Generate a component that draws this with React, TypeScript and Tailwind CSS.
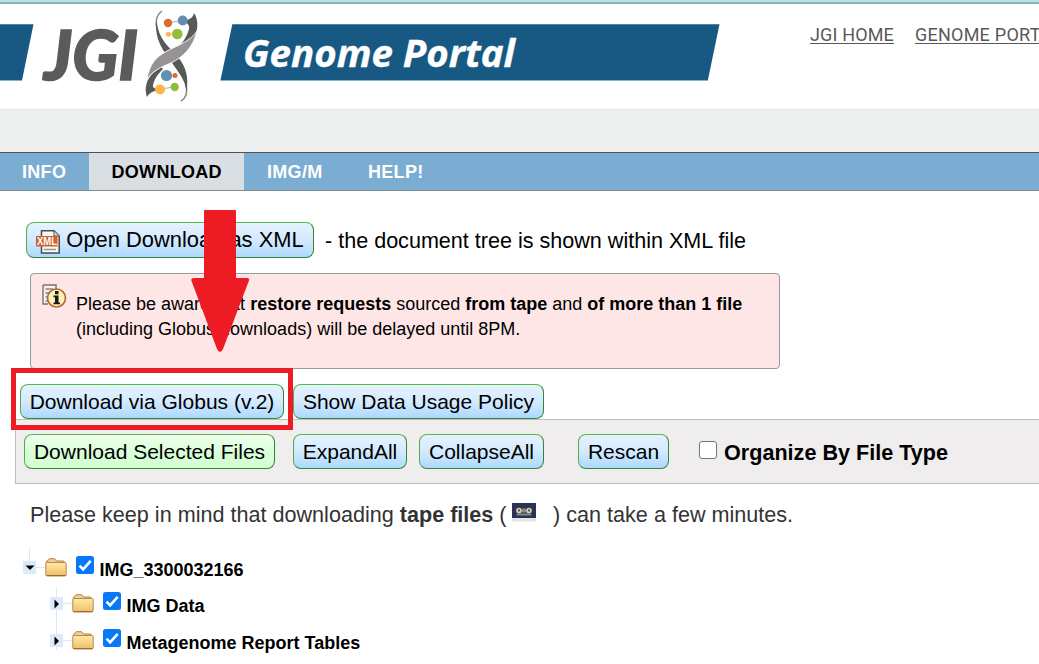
import type { ReactNode } from 'react';

function Button({ children, className, green = false }: { children: ReactNode; className: string; green?: boolean }) {
  const fill = green ? 'from-[#f0fff0] via-[#d8ffd8] to-[#d2ffd0]' : 'from-[#e6f2ff] via-[#d3eaff] to-[#acd9ff]';
  return (
    <button
      className={`flex shrink-0 items-center justify-center rounded-[8px] border border-t-[#55bb44] border-l-[#55aa4c] border-r-[#358535] border-b-[#358535] bg-linear-to-b whitespace-nowrap text-black ${fill} ${className}`}
    >
      {children}
    </button>
  );
}

function Helix() {
  return (
    <svg className="absolute top-0 left-[140px]" width="64" height="105" viewBox="140 0 64 105">
      <path d="M162 11 C155 16 155 23 158 32" fill="none" stroke="#888" strokeWidth="1.5" />
      <path d="M186 85 C188 93 186 98 181 101" fill="none" stroke="#888" strokeWidth="1.5" />
      <path d="M156 20 C155 34 159 44 165 53 L177 70 C182 77 186 84 186.5 92 C189 77 186 67 178 57 C171 48 162 43 158 29 Z" fill="#575a59" />
      <path d="M194 13 C199 20 198 31 194 38 C190 45 187 49 182 54 L175 49 C183 44 187 36 189 29 C190 25 187 23 183 21 C189 20 193 18 194 13 Z" fill="#575a59" />
      <path d="M147 97 C144 89 146 80 153 73 L161 67 L163 69 C157 75 153 81 153 87 C155 89 158 89 161 89 C154 91 150 92 147 97 Z" fill="#575a59" />
      <path d="M197 31 C193 48 183 57 171 63 C161 67 152 71 147 80 C149 64 156 57 167 51 C181 44 190 41 197 31 Z" fill="#979394" stroke="#fff" strokeWidth=".9" />
      <path d="M168 23L182 20.5M168 34H177M167 76H175M160 89L175 87" stroke="#999" strokeWidth=".8" />
      <circle cx="168" cy="23" r="4.2" fill="#dc6b2f" />
      <circle cx="182.7" cy="20.5" r="5" fill="#648eae" />
      <circle cx="168.4" cy="34.3" r="2.5" fill="#fdb84b" />
      <circle cx="177.3" cy="34" r="5.3" fill="#91bd3b" />
      <circle cx="166.5" cy="75.5" r="5.6" fill="#648eae" />
      <circle cx="175" cy="75.6" r="2.5" fill="#dc6b2f" />
      <circle cx="160" cy="89.4" r="5" fill="#ffb549" />
      <circle cx="174.7" cy="87" r="4.2" fill="#91bd3b" />
    </svg>
  );
}

function Banner() {
  return (
    <div className="relative h-[105px] w-[720px] shrink-0">
      <svg width="720" height="105" viewBox="0 4 720 105">
        <path d="M0 24.2H33.5L22 80.5H0ZM232.3 24.2H719.5L707.8 80.5H220.4Z" fill="#185983" />
        <text x="44" y="79.8" textLength="94" lengthAdjust="spacingAndGlyphs" fill="#5b5b5b" stroke="#5b5b5b" strokeWidth="1.6" className="font-[Lato] text-[68px] font-black italic">JGI</text>
        <text x="243" y="67.2" textLength="272" lengthAdjust="spacingAndGlyphs" fill="#fff" stroke="#fff" strokeWidth=".4" className="font-['Open_Sans'] text-[38px] font-bold italic">Genome Portal</text>
      </svg>
      <div className="absolute -top-1 left-0"><Helix /></div>
    </div>
  );
}

function XmlIcon() {
  return (
    <svg width="24" height="24" viewBox="0 0 24 24">
      <path d="M5.5.8H18l5.2 5.2v17H5.5Z" fill="#f7f7f5" stroke="#4b4b4b" strokeWidth="1.5" />
      <path d="M18 1v5h5" fill="#ddd" stroke="#555" />
      <path d="M8 19.5h12" stroke="#999" strokeWidth="1.5" />
      <rect x="0" y="6" width="21.5" height="10.5" fill="#cf622b" />
      <text x="1" y="15" fill="#fff" textLength="20" lengthAdjust="spacingAndGlyphs" className="font-['Liberation_Sans'] text-[10px] font-bold">XML</text>
    </svg>
  );
}

function InfoIcon() {
  return (
    <svg width="25" height="25" viewBox="0 0 25 25">
      <path d="M1 1h13v5M1 1v19h5" fill="#fbf4f2" stroke="#77716f" strokeWidth="1.4" />
      <path d="M3.5 5h8M3.5 9h4M3.5 13h3M3.5 17h3" stroke="#8d8785" strokeWidth="1.3" />
      <circle cx="14.5" cy="14" r="9" fill="#ffeeb6" stroke="#ad6735" strokeWidth="1.6" />
      <path d="M13 7h3.5v3.2H13ZM11.5 11.5h5v7H18v1.8h-6.5v-1.8H13v-5.2h-1.5Z" fill="#171717" />
    </svg>
  );
}

function TapeIcon() {
  return (
    <svg width="24" height="19" viewBox="0 0 24 19">
      <rect y="15" width="24" height="3.5" fill="#e5e5e5" />
      <rect width="24" height="15" fill="#213466" />
      <rect x="2" y="2.5" width="20" height="11" fill="#343434" />
      <path d="M4 12.5l1.5-2h13l1.5 2Z" fill="#888" />
      <circle cx="7" cy="7.5" r="2" fill="#555" stroke="#ccc" strokeWidth="1.7" />
      <circle cx="17" cy="7.5" r="2" fill="#555" stroke="#ccc" strokeWidth="1.7" />
      <path d="M10 5.500h4v4h-4z" fill="#888" />
    </svg>
  );
}

function Folder() {
  return (
    <svg width="22" height="19" viewBox="0 0 22 19">
      <defs>
        <linearGradient id="folder" x2="0" y2="1"><stop stopColor="#ffe9ac" /><stop offset="1" stopColor="#efc064" /></linearGradient>
      </defs>
      <path d="M1 4.5Q1 3 2.4 3L3.5 1.2Q4 .7 5 .7h4q1 0 1.5.8L11.5 3H18q1.3 0 1.3 1.3V6" fill="#ead099" stroke="#b98237" />
      <path d="M.8 5.5q0-1 1.2-1h17.8q1.4 0 1.4 1.3v10.7q0 1.5-1.6 1.5H2.4Q.8 18 .8 16.5Z" fill="url(#folder)" stroke="#bd8845" />
      <path d="M1.6 17.5h19" stroke="#986a4a" />
    </svg>
  );
}

function TreeRow({ label, open = false, className }: { label: string; open?: boolean; className: string }) {
  return (
    <div className={`flex items-start ${className}`}>
      <svg className="mt-[13px] shrink-0" width="22" height="13" viewBox="0 0 22 13">
        <rect width="13" height="13" fill="#dceaf9" />
        <path d="M13 6.5h9" stroke="#d9e8fb" strokeWidth="1.2" />
        <path d={open ? 'M2.5 4.500h9L7 9Z' : 'M4.5 2.500v9L9 7Z'} fill="#000" />
      </svg>
      <div className="mt-[10px] shrink-0"><Folder /></div>
      <svg className="mt-[8px] ml-[9px] shrink-0" width="18" height="18" viewBox="0 0 18 18">
        <rect width="18" height="18" rx="2.5" fill="#0878f9" />
        <path d="M3.5 9.6l3.6 3.7 7.6-8.5" fill="none" stroke="#fff" strokeWidth="2.6" />
      </svg>
      <span className="ml-[5.500px] pt-[9px] text-[18px] leading-[26px] font-bold whitespace-nowrap">{label}</span>
    </div>
  );
}

export default function App() {
  return (
    <div className="relative h-[664px] w-[1039px] overflow-hidden bg-white font-['Liberation_Sans',Arial,sans-serif] text-black">
      <header className="flex h-[109px] border-t-2 border-[#b9e1e5]">
        <div className="flex w-full border-t-2 border-[#8cb3b6]">
          <Banner />
          <nav className="ml-[90px] flex gap-[21px] pt-[19px] font-['Roboto'] text-[18px] leading-6 tracking-[0.15px] whitespace-nowrap text-[#58585a] underline decoration-1 underline-offset-[2px]">
            <a className="shrink-0">JGI HOME</a>
            <a className="shrink-0 tracking-[0.25px]">GENOME PORTAL</a>
          </nav>
        </div>
      </header>
      <div className="h-[43px] border-t border-[#e5e7e7] bg-[#eef0ef]" />
      <nav className="flex h-[39px] border-t border-b border-t-[#505254] border-b-[#858b8f] bg-[#7badd3] text-[18px] leading-[37px] font-bold tracking-[0.3px] text-white">
        <a className="h-[37px] w-[89px] pt-[2px] pl-[22px] leading-[35px]">INFO</a>
        <a className="h-[37px] w-[155px] bg-[#d9dee2] pt-[2px] pl-[22.5px] leading-[35px] text-black">DOWNLOAD</a>
        <a className="h-[37px] w-[101px] pt-[2px] pl-[23px] leading-[35px]">IMG/M</a>
        <a className="h-[37px] pt-[2px] pl-[23px] leading-[35px]">HELP!</a>
      </nav>
      <main>
        <div className="mt-[31px] ml-[26px] flex h-9 items-center text-[21.57px] whitespace-nowrap">
          <Button className="h-[36px] w-[288px] gap-[6px] pt-px text-[21.9px]"><span className="mt-[2px]"><XmlIcon /></span><span>Open Download as XML</span></Button>
          <span className="ml-[11px] pt-[2px]">- the document tree is shown within XML file</span>
        </div>
        <section className="mt-[15px] ml-[30px] flex h-[96px] w-[750px] rounded-[4px] border border-[#999] bg-[#ffe6e6] pt-[10px] pl-[11px]">
          <InfoIcon />
          <p className="pt-[8px] pl-[9px] text-[18px] leading-[25px] whitespace-nowrap">
            Please be aware that <b>restore requests</b> sourced <b>from tape</b> and <b>of more than 1 file</b><br />
            (including Globus downloads) will be delayed until 8PM.
          </p>
        </section>
        <div className="mt-[15px] ml-[20px] flex h-[35px] gap-[9px]">
          <Button className="h-[35px] w-[264px] text-[21px]">Download via Globus (v.2)</Button>
          <Button className="h-[35px] w-[251px] text-[21px]">Show Data Usage Policy</Button>
        </div>
        <div className="ml-[15px] flex h-[65px] items-start border border-r-0 border-[#bebebe] bg-[#efeded] pt-[14px] pl-[8px]">
          <Button green className="h-[35px] w-[251px] text-[21px]">Download Selected Files</Button>
          <Button className="ml-[18px] h-[35px] w-[114px] text-[21px]">ExpandAll</Button>
          <Button className="ml-[12px] h-[35px] w-[125px] text-[21px]">CollapseAll</Button>
          <Button className="ml-[34px] h-[35px] w-[91px] text-[21px]">Rescan</Button>
          <span className="mt-[7px] ml-[30px] size-[18px] rounded-[3px] border border-[#767676] bg-white" />
          <span className="ml-[7px] text-[21.6px] leading-[37px] font-bold whitespace-nowrap">Organize By File Type</span>
        </div>
        <p className="mt-[14px] ml-[30px] flex h-8 items-center pt-[2px] text-[21.6px] whitespace-pre text-[#333]">
          Please keep in mind that downloading <b>tape files</b> (<span className="-mt-[5px] mr-[17.5px] ml-[5px]"><TapeIcon /></span>) can take a few minutes.
        </p>
        <div className="relative mt-[18px] h-[116px] overflow-hidden">
          <svg className="absolute top-0 left-0" width="70" height="116"><path d="M29.5 0V22M56.5 40V102" stroke="#d9e8fb" fill="none" /></svg>
          <div className="relative">
            <TreeRow open label="IMG_3300032166" className="ml-[23px] h-[36px]" />
            <TreeRow label="IMG Data" className="ml-[50px] h-[37px]" />
            <TreeRow label="Metagenome Report Tables" className="ml-[50px] h-[40px]" />
          </div>
        </div>
      </main>
      <svg className="absolute top-[209px] left-[190px]" width="60" height="145" viewBox="190 209 60 145">
        <path d="M204 210.5Q204 210 205 210H235Q236 210 236 211V278H247Q250 278 248.8 281L223 349Q220 355 217 349L191.5 281Q190.5 278 194 278H204Z" fill="#ed1c24" />
      </svg>
      <div className="absolute top-[368px] left-[11px] h-[62px] w-[282px] border-[5px] border-[#ed1c24]" />
    </div>
  );
}
